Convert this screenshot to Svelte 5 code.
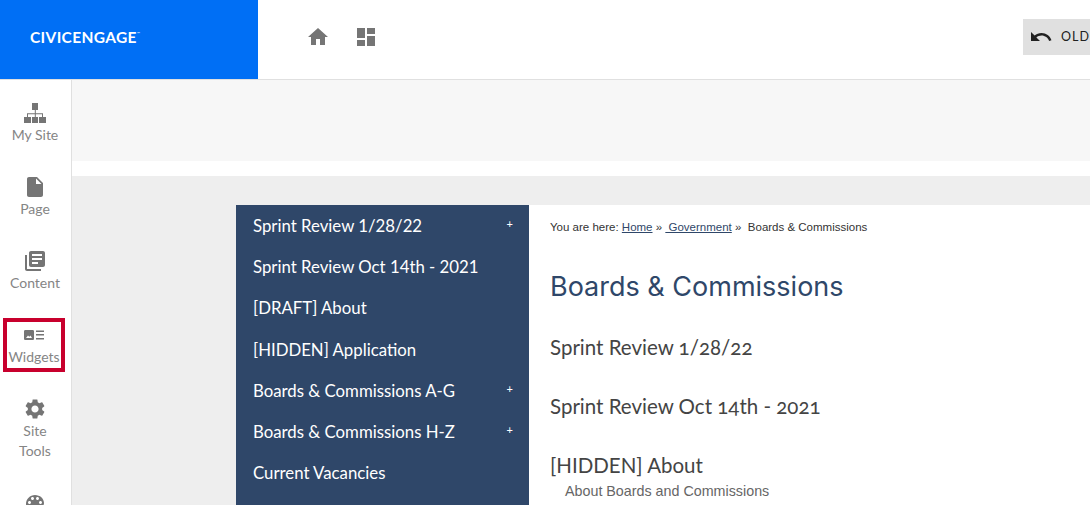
<script>
  const P = {
    file: 'M6 2c-1.1 0-1.99.9-1.99 2L4 20c0 1.1.89 2 1.99 2H18c1.1 0 2-.9 2-2V8l-6-6H6zm7 7V3.5L18.5 9H13z',
    books: 'M4 6H2v14c0 1.1.9 2 2 2h14v-2H4V6zm16-4H8c-1.1 0-2 .9-2 2v12c0 1.1.9 2 2 2h12c1.1 0 2-.9 2-2V4c0-1.1-.9-2-2-2zm-1 9H9V9h10v2zm-4 4H9v-2h6v2zm4-8H9V5h10v2z',
    gear: 'M19.14 12.94c.04-.3.06-.61.06-.94 0-.32-.02-.64-.07-.94l2.03-1.58c.18-.14.23-.41.12-.61l-1.92-3.32c-.12-.22-.37-.29-.59-.22l-2.39.96c-.5-.38-1.03-.7-1.62-.94l-.36-2.54c-.04-.24-.24-.41-.48-.41h-3.84c-.24 0-.43.17-.47.41l-.36 2.54c-.59.24-1.13.57-1.62.94l-2.39-.96c-.22-.08-.47 0-.59.22L2.74 8.87c-.12.21-.08.47.12.61l2.03 1.58c-.05.3-.09.63-.09.94s.02.64.07.94l-2.03 1.58c-.18.14-.23.41-.12.61l1.92 3.32c.12.22.37.29.59.22l2.39-.96c.5.38 1.03.7 1.62.94l.36 2.54c.05.24.24.41.48.41h3.84c.24 0 .44-.17.47-.41l.36-2.54c.59-.24 1.13-.56 1.62-.94l2.39.96c.22.08.47 0 .59-.22l1.92-3.32c.12-.22.07-.47-.12-.61l-2.01-1.58zM12 15.6c-1.98 0-3.6-1.62-3.6-3.6s1.62-3.6 3.6-3.6 3.6 1.62 3.6 3.6-1.62 3.6-3.6 3.6z',
    palette: 'M12 3c-4.97 0-9 4.03-9 9s4.03 9 9 9c.83 0 1.5-.67 1.5-1.5 0-.39-.15-.74-.39-1.01-.23-.26-.38-.61-.38-.99 0-.83.67-1.5 1.5-1.5H16c2.76 0 5-2.24 5-5 0-4.42-4.03-8-9-8zm-5.5 9c-.83 0-1.5-.67-1.5-1.5S5.67 9 6.5 9 8 9.67 8 10.5 7.33 12 6.5 12zm3-4C8.67 8 8 7.33 8 6.5S8.67 5 9.5 5s1.5.67 1.5 1.5S10.33 8 9.5 8zm5 0c-.83 0-1.5-.67-1.5-1.5S13.67 5 14.5 5s1.5.67 1.5 1.5S15.33 8 14.5 8zm3 4c-.83 0-1.5-.67-1.5-1.5S16.67 9 17.5 9s1.5.67 1.5 1.5-.67 1.5-1.5 1.5z',
    sitemap: 'M9 2h6v7h-2.200v3.200H20v3.800h3v6h-7v-6h3v-2.800h-6.200v2.800H15v6H9v-6h2.800v-2.800H5v2.800h3v6H1v-6h3v-3.800h7.800V9H9z',
    widgets: 'M3.500 7h7c1 0 1.500.5 1.500 1.500v7c0 1-.5 1.500-1.500 1.500h-7c-1 0-1.500-.5-1.500-1.500v-7C2 7.500 2.500 7 3.500 7zM4 15h6l-1.500-2.500-1.200 1.200-1.300-1.200zM14 7.500h8V9h-8zM14 11h8v1.500h-8zM14 15h8v1.500h-8z'
  };
  const side = [
    { label: ['My Site'], d: P.sitemap },
    { label: ['Page'], d: P.file },
    { label: ['Content'], d: P.books },
    { label: ['Widgets'], d: P.widgets, boxed: true },
    { label: ['Site', 'Tools'], d: P.gear, tall: true },
    { label: [], d: P.palette }
  ];
  const nav = [
    { t: 'Sprint Review 1/28/22', plus: true },
    { t: 'Sprint Review Oct 14th - 2021' },
    { t: '[DRAFT] About' },
    { t: '[HIDDEN] Application' },
    { t: 'Boards & Commissions A-G', plus: true },
    { t: 'Boards & Commissions H-Z', plus: true },
    { t: 'Current Vacancies' }
  ];
</script>

<div class="page">
  <header class="top">
    <div class="logo"><span class="logotext">CIVICENGAGE<sup>™</sup></span></div>
    <div class="topicons">
      <svg viewBox="0 0 24 24" width="24" height="24"><path d="M10 20v-6h4v6h5v-8h3L12 3 2 12h3v8z" /></svg>
      <svg viewBox="0 0 24 24" width="24" height="24"><path d="M3 13h8V3H3v10zm0 8h8v-6H3v6zm10 0h8V11h-8v10zm0-18v6h8V3h-8z" /></svg>
    </div>
    <div class="old">
      <svg viewBox="0 0 24 24" width="24" height="24"><path d="M12.5 8c-2.65 0-5.05.99-6.9 2.6L2 7v9h9l-3.62-3.62c1.39-1.16 3.16-1.88 5.12-1.88 3.54 0 6.55 2.31 7.6 5.5l2.37-.78C21.08 11.03 17.15 8 12.5 8z" /></svg>
      <span>OLD</span>
    </div>
  </header>
  <div class="body">
    <aside class="side">
      {#each side as s}
        <div class="item" class:boxed={s.boxed} class:tall={s.tall}>
          <svg viewBox="0 0 24 24" width="24" height="24"><path fill-rule="evenodd" d={s.d} /></svg>
          {#each s.label as l}<span>{l}</span>{/each}
        </div>
      {/each}
    </aside>
    <main class="main">
      <div class="strip"></div>
      <div class="canvas">
        <div class="panel">
          <nav class="nav">
            {#each nav as n}
              <div class="navrow"><span>{n.t}</span>{#if n.plus}<b>+</b>{/if}</div>
            {/each}
          </nav>
          <section class="content">
            <p class="crumbs">You are here: <a href="#a">Home</a> <i>»</i> <a href="#b">&nbsp;Government</a> <i>»</i> &nbsp;Boards &amp; Commissions</p>
            <h1>Boards &amp; Commissions</h1>
            <h2 class="first">Sprint Review 1/28/22</h2>
            <h2>Sprint Review Oct 14th - 2021</h2>
            <h2>[HIDDEN] About</h2>
            <p class="sub">About Boards and Commissions</p>
          </section>
        </div>
      </div>
    </main>
  </div>
</div>

<style>
  :global(body) { margin: 0; background: #fff; overflow: hidden; }
  .page { width: 1090px; height: 505px; overflow: hidden; display: flex; flex-direction: column; font-family: "Lato", sans-serif; }
  .top { height: 79px; flex: none; display: flex; align-items: center; background: #fff; border-bottom: 1px solid #e0e0e0; }
  .logo { width: 258px; height: 79px; background: #006ff5; display: flex; align-items: center; padding-left: 30px; box-sizing: border-box; }
  .logotext { color: #fff; font-weight: 700; font-size: 15.5px; letter-spacing: 0.35px; position: relative; top: -3px; }
  .logotext sup { font-size: 4px; font-weight: 400; letter-spacing: 0; vertical-align: 8px; line-height: 0; }
  .topicons { display: flex; gap: 24px; margin-left: 48px; position: relative; top: -3px; }
  .topicons svg { fill: #757575; }
  .old { margin-left: auto; width: 67px; height: 36px; background: #e0e0e0; display: flex; align-items: center; padding-left: 6px; gap: 8px; box-sizing: border-box; position: relative; top: -3px; overflow: hidden; font-size: 12.5px; letter-spacing: 1px; color: #212121; white-space: nowrap; }
  .old svg { fill: #212121; flex: none; }
  .body { flex: 1; display: flex; min-height: 0; }
  .side { width: 70px; padding-right: 1px; flex: none; border-right: 1px solid #e0e0e0; display: flex; flex-direction: column; align-items: center; padding-top: 20px; background: #fff; overflow: hidden; }
  .item { display: flex; flex-direction: column; align-items: center; height: 74px; color: #858585; font-size: 14px; line-height: 20px; flex: none; box-sizing: border-box; padding-top: 1px; }
  .item svg { fill: #757575; flex: none; }
  .item.tall { height: 94px; padding-top: 0; }
  .item.boxed { width: 62px; height: 54px; margin: -4px 0 25px 3px; align-self: flex-start; border: 4px solid #c8002d; padding-top: 1px; }
  .main { flex: 1; min-width: 0; display: flex; flex-direction: column; }
  .strip { height: 81px; background: #f7f7f7; margin-bottom: 15px; flex: none; }
  .canvas { flex: 1; background: #eee; padding: 29px 0 0 164px; min-height: 0; }
  .panel { display: flex; background: #fff; height: 100%; }
  .nav { width: 293px; flex: none; background: #2f4769; color: #fff; font-size: 16.8px; }
  .navrow { height: 41.3px; display: flex; align-items: center; justify-content: space-between; padding: 0 16px 1px 17px; box-sizing: border-box; white-space: nowrap; }
  .navrow b { font-size: 11px; font-weight: 400; position: relative; top: -2px; }
  .content { padding: 14px 0 0 21px; color: #444; flex: 1; }
  .crumbs { margin: 0; font: 11.5px/16px "Liberation Sans", sans-serif; color: #333; white-space: nowrap; }
  .crumbs a { color: #2f4769; text-decoration: underline; }
  .crumbs i { font-style: normal; }
  h1 { margin: 34px 0 0; font: 400 27px/36px "Inter", sans-serif; color: #2f4769; }
  h2 { margin: 23px 0 0; font: 400 20.5px/36px "Lato", sans-serif; color: #444; font-feature-settings: "onum"; }
  h2.first { margin-top: 24px; }
  .sub { margin: -1px 0 0 15px; font: 14.3px/18px "Liberation Sans", sans-serif; color: #666; }
</style>
